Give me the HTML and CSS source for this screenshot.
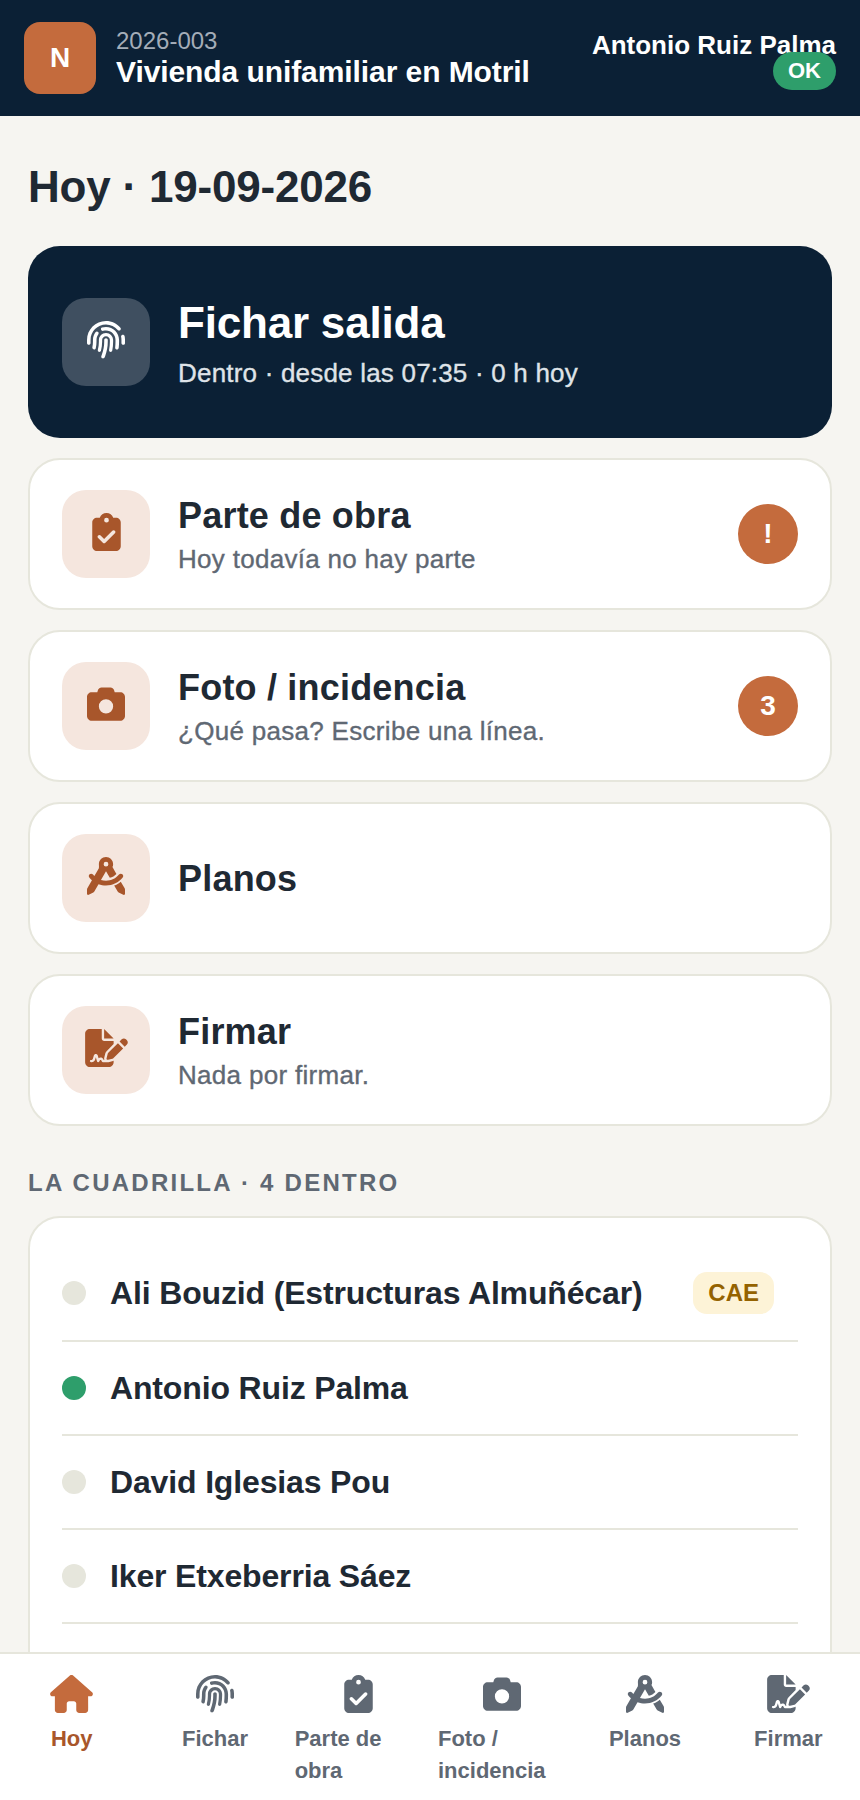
FILE: index.html
```html
<!DOCTYPE html>
<html lang="es">
  <head>
    <meta charset="UTF-8" />
    <meta name="viewport" content="width=device-width, initial-scale=1.0" />
    <title>Hoy</title>
    <link rel="stylesheet" href="styles.css">
  </head>
  <body>
    <svg class="sprites" aria-hidden="true">
      <symbol id="i-house" viewBox="0 0 576 512"><path d="M575.8 255.5c0 18-15 32.1-32 32.1h-32l.7 160.2c0 2.7-.2 5.4-.5 8.1V472c0 22.1-17.9 40-40 40H456c-1.1 0-2.2 0-3.3-.1c-1.4 .1-2.8 .1-4.2 .1H416 392c-22.1 0-40-17.9-40-40V448 384c0-17.7-14.3-32-32-32H256c-17.7 0-32 14.3-32 32v64 24c0 22.1-17.9 40-40 40H160 128.1c-1.5 0-3-.1-4.5-.2c-1.2 .1-2.4 .2-3.6 .2H104c-22.1 0-40-17.9-40-40V360c0-.9 0-1.9 .1-2.8V287.6H32c-18 0-32-14-32-32.1c0-9 3-17 10-24L266.4 8c7-7 15-8 22-8s15 2 21 7L564.8 231.5c8 7 12 15 11 24z"/></symbol>
      <symbol id="i-finger" viewBox="0 0 512 512"><path d="M48 256C48 141.1 141.1 48 256 48c63.1 0 119.6 28.1 157.8 72.5c8.6 10.1 23.8 11.2 33.8 2.6s11.2-23.8 2.6-33.8C403.3 34.6 333.7 0 256 0C114.6 0 0 114.6 0 256v40c0 13.3 10.7 24 24 24s24-10.7 24-24V256zm458.5-52.9c-2.7-13-15.5-21.3-28.4-18.5s-21.3 15.5-18.5 28.4c2.9 13.9 4.5 28.3 4.5 43.1v40c0 13.3 10.7 24 24 24s24-10.7 24-24V256c0-18.1-1.9-35.8-5.5-52.9zM256 80c-19 0-37.4 3-54.5 8.6c-15.2 5-18.7 23.7-8.3 35.9c7.1 8.3 18.8 10.8 29.4 7.9c10.6-2.9 21.8-4.4 33.4-4.4c70.7 0 128 57.3 128 128v24.9c0 25.2-1.5 50.3-4.4 75.3c-1.7 14.6 9.4 27.8 24.2 27.8c11.8 0 21.9-8.6 23.3-20.3c3.3-27.4 5-55 5-82.7V256c0-97.2-78.8-176-176-176zM150.7 148.7c-9.1-10.6-25.3-11.4-33.9-.4C93.7 178 80 215.4 80 256v24.9c0 24.2-2.6 48.4-7.8 71.9C68.8 368.4 80.1 384 96.1 384c10.5 0 19.9-7 22.2-17.3c6.4-28.1 9.7-56.8 9.7-85.8V256c0-27.2 8.5-52.4 22.9-73.1c7.2-10.4 8-24.6-.2-34.2zM256 160c-53 0-96 43-96 96v24.9c0 35.9-4.6 71.5-13.8 106.1c-3.8 14.3 6.7 29 21.5 29c9.5 0 17.9-6.2 20.4-15.4c10.5-39 15.9-79.2 15.9-119.7V256c0-28.7 23.3-52 52-52s52 23.3 52 52v24.9c0 36.3-3.5 72.4-10.4 107.9c-2.7 13.9 7.7 27.2 21.8 27.2c10.2 0 19-7 21-17c7.7-38.8 11.6-78.3 11.6-118.1V256c0-53-43-96-96-96zm24 96c0-13.3-10.7-24-24-24s-24 10.7-24 24v24.9c0 59.9-11 119.3-32.5 175.2l-5.9 15.3c-4.8 12.4 1.4 26.3 13.8 31s26.3-1.4 31-13.8l5.9-15.3C267.9 411.9 280 346.7 280 280.9V256z"/></symbol>
      <symbol id="i-clip" viewBox="0 0 384 512"><path d="M192 0c-41.8 0-77.4 26.7-90.5 64H64C28.7 64 0 92.7 0 128V448c0 35.3 28.7 64 64 64H320c35.3 0 64-28.7 64-64V128c0-35.3-28.7-64-64-64H282.5C269.4 26.7 233.8 0 192 0zm0 64a32 32 0 1 1 0 64 32 32 0 1 1 0-64zM305 273L177 401c-9.4 9.4-24.6 9.4-33.9 0L79 337c-9.4-9.4-9.4-24.6 0-33.9s24.6-9.4 33.9 0l47 47L271 239c9.4-9.4 24.6-9.4 33.9 0s9.4 24.6 0 33.9z"/></symbol>
      <symbol id="i-camera" viewBox="0 0 512 512"><path d="M149.1 64.8L138.7 96H64C28.7 96 0 124.7 0 160V416c0 35.3 28.7 64 64 64H448c35.3 0 64-28.7 64-64V160c0-35.3-28.7-64-64-64H373.3L362.9 64.8C356.4 45.2 338.1 32 317.4 32H194.6c-20.7 0-39 13.2-45.5 32.8zM256 192a96 96 0 1 1 0 192 96 96 0 1 1 0-192z"/></symbol>
      <symbol id="i-compass" viewBox="0 0 512 512"><path d="M352 96c0 14.3-3.1 27.9-8.8 40.2L396 227.4c-23.7 25.3-54.2 44.1-88.5 53.6L256 192h0 0l-68 117.5c21.5 6.8 44.3 10.5 68.1 10.5c70.7 0 133.8-32.7 174.9-84c11.1-13.8 31.2-16 45-5s16 31.2 5 45C428.1 341.8 347 384 256 384c-35.4 0-69.4-6.4-100.7-18.1L98.7 463.7C94 471.8 87 478.4 78.6 482.6L23.2 510.3c-5 2.5-10.9 2.2-15.6-.7S0 501.5 0 496V440.6c0-8.4 2.2-16.7 6.5-24.1l60-103.7C53.7 301.6 41.8 289.3 31 276.1c-11.1-13.8-8.9-33.9 5-45s33.9-8.9 45 5c5.7 7 11.8 13.6 18.2 19.8l59.3-102.5C164.1 127.9 160 112.4 160 96C160 43 203 0 256 0s96 43 96 96zM256 128a32 32 0 1 0 0-64 32 32 0 1 0 0 64zM366 385c33-11 63-29 89-52l50.5 83.5c4.3 7.3 6.5 15.6 6.5 24V496c0 5.5-2.9 10.7-7.6 13.6s-10.6 3.2-15.6 .7l-55.4-27.7c-8.4-4.2-15.4-10.8-20.1-18.9z"/></symbol>
      <symbol id="i-sign" viewBox="0 0 576 512"><path d="M64 0C28.7 0 0 28.7 0 64V448c0 35.3 28.7 64 64 64H320c35.3 0 64-28.7 64-64V428.7c-2.7 1.1-5.4 2-8.2 2.7l-60.1 15c-3 .7-6 1.2-9 1.4c-.9 .1-1.8 .2-2.7 .2H240c-6.1 0-11.6-3.4-14.3-8.8l-8.8-17.7c-1.7-3.4-5.1-5.5-8.8-5.5s-7.2 2.1-8.8 5.5l-8.8 17.7c-2.9 5.9-9.2 9.4-15.7 8.8s-12.1-5.1-13.9-11.3L144 381l-9.8 32.8c-6.1 20.3-24.8 34.2-46 34.2H80c-8.8 0-16-7.2-16-16s7.2-16 16-16h8.2c7.1 0 13.3-4.6 15.3-11.4l14.9-49.5c3.4-11.3 13.8-19.1 25.6-19.1s22.2 7.8 25.6 19.1l11.6 38.6c7.4-6.2 16.8-9.7 26.8-9.7c15.9 0 30.4 9 37.5 23.2l4.4 8.8h8.9c-3.1-8.8-3.7-18.4-1.4-27.8l15-60.1c2.8-11.3 8.6-21.5 16.8-29.7L384 203.6V160H256c-17.7 0-32-14.3-32-32V0H64zM256 0V128H384L256 0zM549.8 139.7c-15.6-15.6-40.9-15.6-56.6 0l-29.4 29.4 70 70 29.4-29.4c15.6-15.6 15.6-40.9 0-56.6l-13.4-13.4zM311.9 321c-4.1 4.1-7 9.2-8.4 14.9l-15 60.1c-1.4 5.5 .2 11.2 4.2 15.2s9.7 5.6 15.2 4.2l60.1-15c5.6-1.4 10.8-4.3 14.9-8.4L512.1 262.7l-70-70L311.9 321z"/></symbol>
    </svg>

    <div class="app">
      <header class="topbar">
        <div class="logo">N</div>
        <div class="project">
          <div class="project-code">2026-003</div>
          <div class="project-name">Vivienda unifamiliar en Motril</div>
        </div>
        <div class="user">
          <div class="user-name">Antonio Ruiz Palma</div>
          <span class="status">OK</span>
        </div>
      </header>

      <main class="content">
        <h1 class="today">Hoy · 19-09-2026</h1>

        <div class="actions">
          <a class="action action-main">
            <span class="tile"><svg class="icon"><use href="#i-finger"/></svg></span>
            <span class="action-text">
              <span class="action-title">Fichar salida</span>
              <span class="action-sub">Dentro · desde las 07:35 · 0 h hoy</span>
            </span>
          </a>
          <a class="action">
            <span class="tile"><svg class="icon icon-clip"><use href="#i-clip"/></svg></span>
            <span class="action-text">
              <span class="action-title">Parte de obra</span>
              <span class="action-sub">Hoy todavía no hay parte</span>
            </span>
            <span class="badge">!</span>
          </a>
          <a class="action">
            <span class="tile"><svg class="icon"><use href="#i-camera"/></svg></span>
            <span class="action-text">
              <span class="action-title">Foto / incidencia</span>
              <span class="action-sub">¿Qué pasa? Escribe una línea.</span>
            </span>
            <span class="badge">3</span>
          </a>
          <a class="action">
            <span class="tile"><svg class="icon"><use href="#i-compass"/></svg></span>
            <span class="action-text">
              <span class="action-title">Planos</span>
            </span>
          </a>
          <a class="action">
            <span class="tile"><svg class="icon icon-wide"><use href="#i-sign"/></svg></span>
            <span class="action-text">
              <span class="action-title">Firmar</span>
              <span class="action-sub">Nada por firmar.</span>
            </span>
          </a>
        </div>

        <h2 class="section">La cuadrilla · 4 dentro</h2>

        <div class="crew">
          <div class="crew-row">
            <span class="dot"></span>
            <span class="crew-name">Ali Bouzid (Estructuras Almuñécar)</span>
            <span class="tag">CAE</span>
          </div>
          <div class="crew-row">
            <span class="dot dot-in"></span>
            <span class="crew-name">Antonio Ruiz Palma</span>
          </div>
          <div class="crew-row">
            <span class="dot"></span>
            <span class="crew-name">David Iglesias Pou</span>
          </div>
          <div class="crew-row">
            <span class="dot"></span>
            <span class="crew-name">Iker Etxeberria Sáez</span>
          </div>
        </div>
      </main>

      <nav class="tabs">
        <a class="tab tab-on"><svg class="tab-icon icon-wide"><use href="#i-house"/></svg><span>Hoy</span></a>
        <a class="tab"><svg class="tab-icon"><use href="#i-finger"/></svg><span>Fichar</span></a>
        <a class="tab"><svg class="tab-icon icon-clip"><use href="#i-clip"/></svg><span>Parte de obra</span></a>
        <a class="tab"><svg class="tab-icon"><use href="#i-camera"/></svg><span>Foto / incidencia</span></a>
        <a class="tab"><svg class="tab-icon"><use href="#i-compass"/></svg><span>Planos</span></a>
        <a class="tab"><svg class="tab-icon icon-wide"><use href="#i-sign"/></svg><span>Firmar</span></a>
      </nav>
    </div>
  </body>
</html>
```

FILE: styles.css
```css
* {
  box-sizing: border-box;
}

html,
body {
  height: 100%;
}

body {
  margin: 0;
  background: #fff;
  color: #1f2933;
  font-family: "Liberation Sans", Arial, sans-serif;
  overflow: hidden;
}

.sprites {
  display: none;
}

.app {
  height: 100vh;
  display: flex;
  flex-direction: column;
}

/* Top bar */
.topbar {
  height: 116px;
  flex: none;
  display: flex;
  align-items: center;
  gap: 20px;
  padding: 0 24px;
  background: #0b2035;
  color: #fff;
}

.logo {
  width: 72px;
  height: 72px;
  flex: none;
  display: flex;
  align-items: center;
  justify-content: center;
  border-radius: 16px;
  background: #c46b3d;
  font-size: 28px;
  font-weight: 700;
}

.project {
  flex: 1;
  min-width: 0;
}

.project-code {
  font-size: 24px;
  line-height: 28px;
  color: #a4adb8;
}

.project-name {
  font-size: 30px;
  line-height: 34px;
  font-weight: 700;
  letter-spacing: -0.08px;
}

.user {
  display: flex;
  flex-direction: column;
  align-items: flex-end;
}

.user-name {
  font-size: 26px;
  line-height: 30px;
  font-weight: 700;
  margin-top: 4px;
}

.status {
  margin-top: -8px;
  padding: 0 15px;
  height: 38px;
  display: flex;
  align-items: center;
  border-radius: 19px;
  background: #2e9e6b;
  font-size: 22px;
  font-weight: 700;
}

/* Main column */
.content {
  flex: 1;
  min-height: 0;
  overflow: hidden;
  padding: 0 28px;
  background: #f6f5f1;
}

.today {
  margin: 46px 0 34px;
  font-size: 44px;
  line-height: 50px;
  font-weight: 700;
  letter-spacing: -0.2px;
}

.actions {
  display: flex;
  flex-direction: column;
  gap: 20px;
}

.action {
  height: 152px;
  display: flex;
  align-items: center;
  gap: 28px;
  padding: 0 32px;
  border: 2px solid #e6e6dc;
  border-radius: 32px;
  background: #fff;
}

.action-main {
  height: 192px;
  padding: 0 34px;
  border: 0;
  background: #0b2035;
  color: #fff;
}

.tile {
  width: 88px;
  height: 88px;
  flex: none;
  display: flex;
  align-items: center;
  justify-content: center;
  border-radius: 24px;
  background: #f5e6de;
  color: #a8562b;
}

.action-main .tile {
  background: #3f4f60;
  color: #fff;
}

.icon {
  width: 38px;
  height: 38px;
  margin-bottom: 4px;
  fill: currentColor;
}

.action-text {
  flex: 1;
  min-width: 0;
  display: flex;
  flex-direction: column;
  gap: 7px;
  padding-top: 2px;
}

.action-main .action-text {
  gap: 9px;
}

.action-title {
  font-size: 36px;
  line-height: 40px;
  font-weight: 700;
  letter-spacing: 0.2px;
}

.action-main .action-title {
  font-size: 44px;
  line-height: 50px;
  letter-spacing: -0.2px;
}

.action-sub {
  font-size: 26px;
  line-height: 32px;
  letter-spacing: 0.3px;
  -webkit-text-stroke: 0.35px currentColor;
  color: #5f6873;
}

.action-main .action-sub {
  letter-spacing: 0.2px;
  color: #dfe3e8;
}

.badge {
  width: 60px;
  height: 60px;
  flex: none;
  display: flex;
  align-items: center;
  justify-content: center;
  border-radius: 50%;
  background: #c46b3d;
  color: #fff;
  font-size: 28px;
  font-weight: 700;
}

/* Crew list */
.section {
  margin: 43px 0 19px;
  font-size: 24px;
  line-height: 28px;
  font-weight: 700;
  letter-spacing: 2.26px;
  text-transform: uppercase;
  color: #5f6873;
}

.crew {
  padding: 28px 32px 200px;
  border: 2px solid #e6e6dc;
  border-radius: 32px;
  background: #fff;
}

.crew-row {
  display: flex;
  align-items: center;
  gap: 24px;
  padding: 26px 0;
  border-bottom: 2px solid #e6e6dc;
}

.dot {
  width: 24px;
  height: 24px;
  flex: none;
  border-radius: 50%;
  background: #e6e6dc;
}

.dot-in {
  background: #2e9e6b;
}

.crew-name {
  flex: 1;
  min-width: 0;
  font-size: 32px;
  line-height: 40px;
  font-weight: 700;
  letter-spacing: -0.15px;
}

.tag {
  height: 42px;
  padding: 0 15px;
  margin-right: 24px;
  display: flex;
  align-items: center;
  border-radius: 14px;
  background: #fdf3d7;
  color: #946200;
  font-size: 24px;
  font-weight: 700;
}

/* Bottom tabs */
.tabs {
  height: 148px;
  flex: none;
  display: grid;
  grid-template-columns: repeat(6, 1fr);
  border-top: 2px solid #e6e6dc;
  background: #fff;
}

.tab {
  display: flex;
  flex-direction: column;
  align-items: center;
  gap: 10px;
  padding: 21px 8px 0;
  font-size: 22px;
  line-height: 32px;
  font-weight: 700;
  color: #5f6873;
}

.tab-on {
  color: #a8562b;
}

.tab-on .tab-icon {
  color: #c46b3d;
}

.tab-icon {
  width: 38px;
  height: 38px;
  flex: none;
  fill: currentColor;
}

.icon-wide {
  width: 43px;
}

.icon-clip {
  width: 29px;
}
```
